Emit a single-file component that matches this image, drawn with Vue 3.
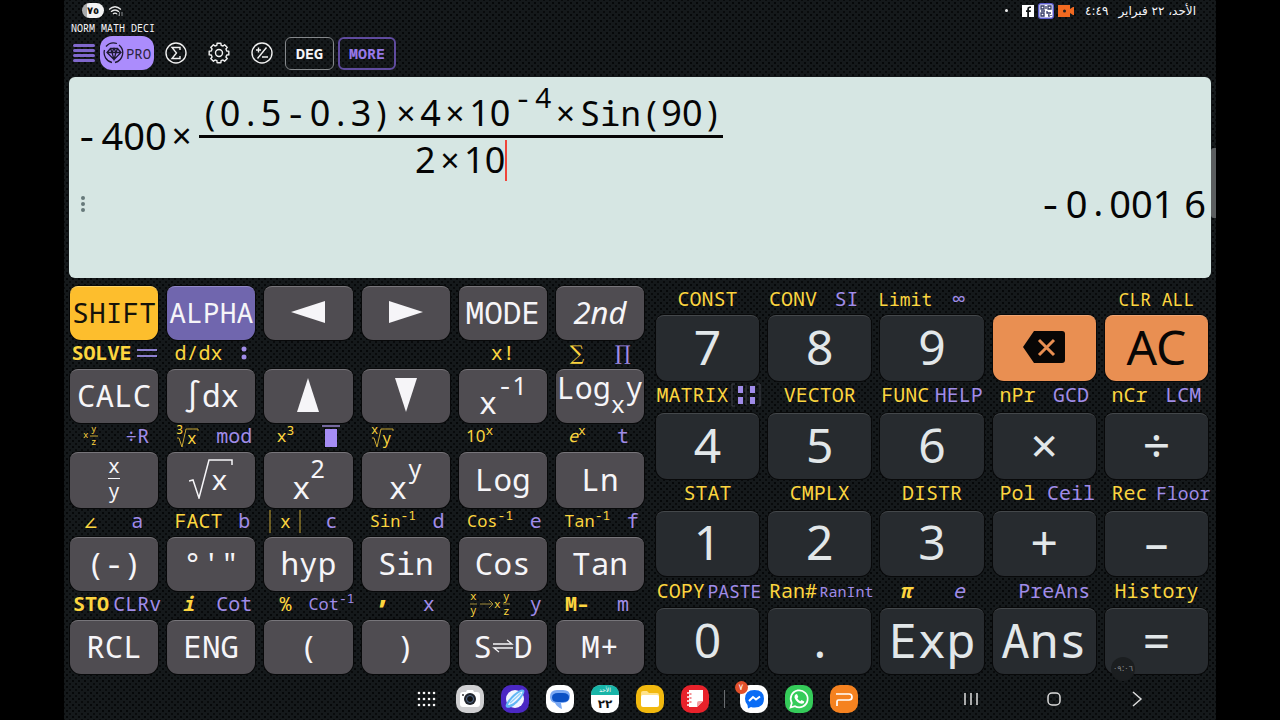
<!-- ScientificCalculator -->
<template>
  <div class="screen">
    <header class="status">
      <div class="status-side">
        <span class="battery">٧٥</span>
        <svg width="15" height="12" viewBox="0 0 15 12" fill="none" stroke="#e8e8e8" stroke-width="1.3">
          <path d="M1 4.5Q7 -1 13 4.5M3 6.8Q7 3.2 11 6.8M5 9Q7 7.2 9 9" />
          <path d="M11.5 7v4M10 9.5l1.500 1.500M14 7v4" stroke="#8a8d90" stroke-width="1" />
        </svg>
      </div>
      <div class="status-side notices" dir="rtl">
        <span>الأحد، ٢٢ فبراير</span>
        <span class="clock">٤:٤٩</span>
        <svg width="17" height="12" viewBox="0 0 17 12">
          <path d="M0 0h12v4l3-2h1v8h-1l-3-2v4H0z" fill="#f26a21" />
          <circle cx="6.500" cy="6" r="1.500" fill="#222" />
        </svg>
        <svg width="16" height="16" viewBox="0 0 16 16">
          <rect width="16" height="16" rx="3" fill="#5a5ccc" />
          <rect x="1.500" y="1.500" width="13" height="13" rx="1" fill="#fff" />
          <g fill="none" stroke="#333a66" stroke-width="1.300">
            <path d="M3 3h3v3H3zM10 3h3v3h-3zM3 10h3v3H3zM9 8v2h4M8 3v3M10 12h1v2M13 12v1M3 8h4" />
          </g>
        </svg>
        <svg width="12" height="12" viewBox="0 0 12 12">
          <rect width="12" height="12" fill="#fff" />
          <path d="M7 12V7h1.800V5.300H7V4q0-1 1-1h1V1.500H7.500Q5.200 1.500 5.200 4v1.300H4V7h1.200v5z" fill="#15191b" />
        </svg>
        <i class="more-dot"></i>
      </div>
    </header>

    <div class="modes">NORM MATH DECI</div>

    <nav class="toolbar">
      <button class="menu" aria-label="Menu"><i></i><i></i><i></i><i></i></button>
      <button class="pro">
        <svg width="22" height="22" viewBox="0 0 22 22" fill="none" stroke="#1d1930" stroke-width="1.300">
          <path d="M3 4.500A10 10 0 0 1 14 1.500M1.500 8A10 10 0 0 0 9 20.500M16 3a10 10 0 0 1-4 17.500" />
          <path d="M7.500 6.500h7L18 10.500l-7 7-7-7zM4 10.500h14M7.500 6.500l1.500 4 2 7 2-7 1.500-4M9 10.500l2-4 2 4" />
        </svg>
        <span>PRO</span>
      </button>
      <button class="tool" aria-label="Sum">
        <svg width="22" height="22" viewBox="0 0 22 22" fill="none" stroke="#f1f1f1" stroke-width="1.400">
          <circle cx="11" cy="11" r="10" />
          <path d="M15 8V5.500H7l4.500 5.500L7 16.500h8V14" />
        </svg>
      </button>
      <button class="tool" aria-label="Settings">
        <svg width="22" height="22" viewBox="0 0 22 22" fill="none" stroke="#f1f1f1" stroke-width="1.400" stroke-linejoin="round">
          <circle cx="11" cy="11" r="3.500" />
          <path :d="gearPath" />
        </svg>
      </button>
      <button class="tool" aria-label="Sign">
        <svg width="22" height="22" viewBox="0 0 22 22" fill="none" stroke="#f1f1f1" stroke-width="1.400">
          <circle cx="11" cy="11" r="10" />
          <path d="M5 8h5M7.500 5.500v5M15.500 5.500l-9 11M11 15h6" />
        </svg>
      </button>
      <button class="chip">DEG</button>
      <button class="chip more">MORE</button>
    </nav>

    <main class="display">
      <div class="expression">
        <b>-</b><span>400</span><b>×</b>
        <div class="fraction">
          <div class="part top">
            <em>(</em><span>0</span><em>.</em><span>5</span><b>-</b><span>0</span><em>.</em><span>3</span><em>)</em><b>×</b><span>4</span><b>×</b><span>10</span>
            <div class="power"><b>-</b><span>4</span></div>
            <b>×</b><em>Sin(</em><span>90</span><em>)</em>
          </div>
          <div class="part">
            <span>2</span><b>×</b><span>10</span><i class="caret"></i>
          </div>
        </div>
      </div>
      <div class="result">
        <button class="dots" aria-label="Options"><i></i><i></i><i></i></button>
        <output><b>-</b><span>0</span><em>.</em><span>001&nbsp;6</span></output>
      </div>
      <i class="scroll"></i>
    </main>

    <section class="keypad">
      <div class="pad functions">
        <div v-for="(row, r) in functionRows" :key="r" class="row">
          <div v-for="(k, c) in row" :key="c" class="cell">
            <div v-if="r > 0" class="labels" :class="k.split">
              <span v-if="k.y" class="y" v-html="k.y"></span>
              <span v-if="k.p" class="p" v-html="k.p"></span>
            </div>
            <button class="key" :class="k.cls" :aria-label="k.name" v-html="k.t"></button>
          </div>
        </div>
      </div>
      <div class="pad numbers">
        <div v-for="(row, r) in numberRows" :key="r" class="row">
          <div v-for="(k, c) in row" :key="c" class="cell">
            <div class="labels" :class="k.split">
              <span v-if="k.y" class="y" v-html="k.y"></span>
              <span v-if="k.p" class="p" v-html="k.p"></span>
            </div>
            <button class="key" :class="k.cls" :aria-label="k.name" v-html="k.t"></button>
          </div>
        </div>
      </div>
      <span class="bubble">٠٩:٠٦</span>
    </section>

    <footer class="taskbar">
      <div class="dock">
        <button class="app apps" aria-label="Apps">
          <svg viewBox="0 0 24 28" fill="#f4f4f4">
            <template v-for="y in 3" :key="y">
              <circle v-for="x in 4" :key="x" :cx="x * 5 - 1" :cy="y * 6 + 2" r="1.300" />
            </template>
          </svg>
        </button>
        <button class="app" aria-label="Camera">
          <svg viewBox="0 0 28 28">
            <rect width="28" height="28" rx="10" fill="#cfcfd1" />
            <path d="M7 7h3l1-2h6l1 2h3q3 0 3 3v9q0 3-3 3H7q-3 0-3-3v-9q0-3 3-3z" fill="#fff" />
            <circle cx="14" cy="14" r="6" fill="#20242b" />
            <circle cx="14" cy="14" r="3.500" fill="#111" stroke="#536b8c" />
            <circle cx="7" cy="10" r="1" fill="#333" />
          </svg>
        </button>
        <button class="app" aria-label="Internet">
          <svg viewBox="0 0 28 28">
            <rect width="28" height="28" rx="10" fill="#4b28c4" />
            <circle cx="14" cy="14" r="9" fill="#f3f5ff" />
            <path d="M5 22C2 18 19 1 23 5c3 4-13 22-18 17z" fill="#62b7f4" />
            <path d="M7 20C9 15 18 6 21.500 6.500c0 4-10 14-14.500 13.500z" fill="#f3f5ff" />
            <path d="M9 18L20 8" stroke="#8fd2fb" stroke-width="1.500" />
          </svg>
        </button>
        <button class="app" aria-label="Messages">
          <svg viewBox="0 0 28 28">
            <rect width="28" height="28" rx="10" fill="#fff" />
            <path d="M11 5h6q7 0 7 6t-7 7h-2l1 6q-5-2-7-6-5-1-5-6 0-7 7-7z" fill="#7ba9f3" />
            <path d="M12 8h5q6 0 6 4.500T17 17h-5q-6 0-6-4.500T12 8z" fill="#0b51c5" />
          </svg>
        </button>
        <button class="app" aria-label="Calendar">
          <svg viewBox="0 0 28 28">
            <rect width="28" height="28" rx="10" fill="#fff" />
            <path d="M0 10q0-10 10-10h8q10 0 10 10z" fill="#18b5a8" />
            <text x="14" y="7" class="cal-day">الأحد</text>
            <text x="14" y="23" class="cal-date">٢٢</text>
          </svg>
        </button>
        <button class="app" aria-label="Files">
          <svg viewBox="0 0 28 28">
            <rect width="28" height="28" rx="10" fill="#f2b90f" />
            <path d="M5 8q0-2 2-2h4l2 2h8q2 0 2 2v10H5z" fill="#ffe28a" />
            <rect x="5" y="10" width="18" height="12" rx="2" fill="#fff" />
          </svg>
        </button>
        <button class="app" aria-label="Notes">
          <svg viewBox="0 0 28 28">
            <rect width="28" height="28" rx="10" fill="#e8222b" />
            <path d="M8 5h14v11l-6 6H8z" fill="#fff" />
            <path d="M22 16h-4q-2 0-2 2v4z" fill="#f3a0a2" />
            <path d="M6 8h4M6 12h4M6 16h4M6 20h4" stroke="#fff" stroke-width="1.500" />
            <path d="M8.500 9h2M8.500 13h2M8.500 17h2" stroke="#e8222b" />
          </svg>
        </button>
        <i class="divider"></i>
        <button class="app" aria-label="Messenger">
          <svg viewBox="0 0 28 28">
            <rect width="28" height="28" rx="10" fill="#fff" />
            <path d="M14.500 5q9.500 0 9.500 8.800T14.500 22.500q-2 0-3.500-.5l-3 1.500-.5-3.500Q5 17.500 5 13.800 5 5 14.500 5z" fill="#0a6cf5" />
            <path d="M9 16l4-4 3 2.500 4-3" fill="none" stroke="#fff" stroke-width="2" />
          </svg>
          <span class="badge">٧</span>
        </button>
        <button class="app" aria-label="WhatsApp">
          <svg viewBox="0 0 28 28">
            <rect width="28" height="28" rx="10" fill="#35cc5a" />
            <path d="M5.500 22.500l1.300-4.500a8.500 8.500 0 1 1 3.200 3.200z" fill="none" stroke="#fff" stroke-width="1.700" />
            <path d="M10.500 9.500l1.500-.5 1.300 3-1 1.200q1 2 3 3l1.200-1.200 2.800 1.400q0 2.100-2.500 2.400-5-.3-7.300-6-.2-2.300 1-3.300z" fill="#fff" />
          </svg>
        </button>
        <button class="app" aria-label="Presentation">
          <svg viewBox="0 0 28 28">
            <rect width="28" height="28" rx="10" fill="#f58220" />
            <path d="M6 9h13q3 0 3 3t-3 3H8.500q-1.500 0-1.500 1.500V21" fill="none" stroke="#fff" stroke-width="1.700" />
          </svg>
        </button>
      </div>
      <div class="nav">
        <button aria-label="Recents">
          <svg width="16" height="16" viewBox="0 0 16 16" stroke="#ddd" stroke-width="1.500"><path d="M2 2v12M8 2v12M14 2v12" /></svg>
        </button>
        <button aria-label="Home">
          <svg width="16" height="16" viewBox="0 0 16 16" fill="none" stroke="#ddd" stroke-width="1.500"><rect x="2" y="2" width="12" height="12" rx="4" /></svg>
        </button>
        <button aria-label="Back">
          <svg width="16" height="16" viewBox="0 0 16 16" fill="none" stroke="#ddd" stroke-width="1.500"><path d="M4 1l8 7-8 7" /></svg>
        </button>
      </div>
    </footer>
  </div>
</template>

<script setup>
import { computed } from 'vue';

// Small drawings used on the keys and above them
const arrow = (points) =>
  `<svg width="36" height="36" viewBox="0 0 36 36"><polygon points="${points}" fill="#f6f5f8"/></svg>`;

const radical = `<svg width="44" height="40" viewBox="0 0 44 40">
  <path d="M0 22l4-1 6 18L20 1h23v5" fill="none" stroke="#f6f5f8" stroke-width="1.500"/>
  <text x="22" y="31" font-size="28" fill="#f6f5f8">x</text></svg>`;

const rootLabel = (index, body) => `<svg width="24" height="27" viewBox="0 0 24 27">
  <path d="M1 16h2l3 9L10 7h12v2" fill="none" stroke="#c9a732" stroke-width="1"/>
  <text x="0" y="12" font-size="12">${index}</text><text x="11" y="22" font-size="16">${body}</text></svg>`;

const mixedLabel = `<svg width="16" height="26" viewBox="0 0 16 26">
  <text x="0" y="15" font-size="9">x</text><text x="8" y="9" font-size="9">y</text>
  <path d="M7 13h8" stroke="#c9a732"/><text x="8" y="22" font-size="9">z</text></svg>`;

const convertLabel = `<svg width="40" height="28" viewBox="0 0 40 28">
  <text x="0" y="10" font-size="11">x</text><text x="0" y="24" font-size="11">y</text>
  <path d="M0 14h7M33 14h7M10 14h13M19 10l4 4-4 4" stroke="#a08a3a" fill="none"/>
  <text x="24" y="18" font-size="11">x</text><text x="33" y="10" font-size="11">y</text><text x="33" y="25" font-size="11">z</text></svg>`;

const absLabel = `<svg width="32" height="26" viewBox="0 0 32 26">
  <path d="M1 2v23M31 2v23" stroke="#c9a732"/><text x="11" y="20" font-size="18">x</text></svg>`;

const swap = `<svg width="22" height="16" viewBox="0 0 22 16">
  <path d="M1 6h19l-5-4M21 10H2l5 4" fill="none" stroke="#f6f5f8" stroke-width="1.300"/></svg>`;

const equals = `<svg width="20" height="10" viewBox="0 0 20 10"><path d="M0 2h20M0 8h20" stroke="#8d80d0" stroke-width="2"/></svg>`;
const colon = `<svg width="6" height="14" viewBox="0 0 6 14"><circle cx="3" cy="3" r="2.500" fill="#a08ce8"/><circle cx="3" cy="11" r="2.500" fill="#a08ce8"/></svg>`;
const cursor = `<svg width="18" height="22" viewBox="0 0 18 22"><path d="M0 1h18" stroke="#76699f" stroke-width="2"/><rect x="3" y="4" width="12" height="18" fill="#a68df5"/></svg>`;
const matrix = `<svg width="30" height="24" viewBox="0 0 30 24">
  <path d="M4 1H1v22h3M26 1h3v22h-3M15 2v20" fill="none" stroke="#3f4148"/>
  <path d="M7 3h5v7H7zM19 3h5v7h-5zM7 14h5v7H7zM19 14h5v7h-5z" fill="#a08ce8"/></svg>`;
const erase = `<svg width="44" height="34" viewBox="0 0 44 34">
  <path d="M12 1h28q3 0 3 3v26q0 3-3 3H12L1 17z" fill="#080605"/>
  <path d="M17 10l15 15M32 10L17 25" stroke="#e98f52" stroke-width="3"/></svg>`;

const functionRows = [
  [
    { t: 'SHIFT', cls: 'shift' },
    { t: 'ALPHA', cls: 'alpha' },
    { t: arrow('1,18 35,7 35,29'), name: 'Left' },
    { t: arrow('1,7 35,18 1,29'), name: 'Right' },
    { t: 'MODE' },
    { t: '2nd', cls: 'second' },
  ],
  [
    { t: 'CALC', y: '<b>SOLVE</b>', p: equals, split: 'wide' },
    { t: '∫dx', y: 'd/dx', p: colon, split: 'wide' },
    { t: arrow('18,1 29,35 7,35'), name: 'Up' },
    { t: arrow('7,1 29,1 18,35'), name: 'Down' },
    { t: 'x<sup>-<u>1</u></sup>', cls: 'pow', y: 'x!' },
    { t: 'Log<sub>x</sub>y', cls: 'tight', y: '<tt>∑</tt>', p: '<tt>∏</tt>' },
  ],
  [
    { t: '<span class="stack"><i>x</i><i>y</i></span>', y: mixedLabel, p: '÷R' },
    { t: radical, name: 'Square root', y: rootLabel('3', 'x'), p: 'mod' },
    { t: 'x<sup><u>2</u></sup>', cls: 'pow', y: '<small>x<sup>3</sup></small>', p: cursor },
    { t: 'x<sup>y</sup>', cls: 'pow', y: rootLabel('x', 'y'), p: '&nbsp;' },
    { t: 'Log', y: '<small><u>10</u><sup>x</sup></small>', p: '&nbsp;' },
    { t: 'Ln', y: '<small><em>e</em><sup>x</sup></small>', p: 't' },
  ],
  [
    { t: '(-)', y: '∠', p: 'a' },
    { t: '°\'"', y: 'FACT', p: 'b', split: 'wide' },
    { t: 'hyp', y: absLabel, p: 'c' },
    { t: 'Sin', y: '<small>Sin<sup>-1</sup></small>', p: 'd', split: 'wide' },
    { t: 'Cos', y: '<small>Cos<sup>-1</sup></small>', p: 'e', split: 'wide' },
    { t: 'Tan', y: '<small>Tan<sup>-1</sup></small>', p: 'f', split: 'wide' },
  ],
  [
    { t: 'RCL', y: '<b>STO</b>', p: 'CLRv' },
    { t: 'ENG', y: '<b><em>i</em></b>', p: 'Cot' },
    { t: '(', y: '%', p: '<small>Cot<sup>-1</sup></small>' },
    { t: ')', y: '<big>’</big>', p: 'x' },
    { t: `S${swap}D`, y: convertLabel, p: 'y', split: 'wide' },
    { t: 'M+', y: '<b>M–</b>', p: 'm' },
  ],
];

const numberRows = [
  [
    { t: '7', y: 'CONST' },
    { t: '8', y: 'CONV', p: 'SI' },
    { t: '9', y: '<small>Limit</small>', p: '∞' },
    { t: erase, cls: 'orange', name: 'Delete' },
    { t: 'AC', cls: 'orange', y: '<small>CLR ALL</small>' },
  ],
  [
    { t: '4', y: 'MATRIX', p: matrix, split: 'wide' },
    { t: '5', y: 'VECTOR' },
    { t: '6', y: 'FUNC', p: 'HELP' },
    { t: '×', y: 'nPr', p: 'GCD' },
    { t: '÷', y: 'nCr', p: 'LCM' },
  ],
  [
    { t: '1', y: 'STAT' },
    { t: '2', y: 'CMPLX' },
    { t: '3', y: 'DISTR' },
    { t: '+', y: 'Pol', p: 'Ceil' },
    { t: '–', y: 'Rec', p: '<small>Floor</small>' },
  ],
  [
    { t: '0', y: 'COPY', p: '<small>PASTE</small>' },
    { t: '.', cls: 'mono', y: 'Ran#', p: '<s>RanInt</s>' },
    { t: 'Exp', cls: 'mono', y: '<b><em>π</em></b>', p: '<em>e</em>' },
    { t: 'Ans', cls: 'mono', p: 'PreAns', split: 'late' },
    { t: '=', y: 'History' },
  ],
];

// Eight-tooth gear outline around (11, 11)
const gearPath = computed(() => {
  const pts = [];
  for (let i = 0; i < 8; i++) {
    for (const [offset, radius] of [[-15, 8], [-11, 10], [11, 10], [15, 8]]) {
      const a = ((i * 45 + offset) * Math.PI) / 180;
      pts.push(`${(11 + radius * Math.cos(a)).toFixed(2)} ${(11 + radius * Math.sin(a)).toFixed(2)}`);
    }
  }
  return `M${pts.join('L')}z`;
});
</script>

<style>
body {
  background: #000;
}
</style>

<style scoped>
.screen {
  --mono: "Droid Sans Mono", "Noto Sans Mono", "DejaVu Sans Mono", monospace;
  --digits: "Noto Sans", sans-serif;
  box-sizing: border-box;
  min-height: 100vh;
  margin: 0 5%;
  display: flex;
  flex-direction: column;
  background-color: #15191b;
  background-image:
    radial-gradient(circle, #060809 1px, transparent 1px),
    radial-gradient(circle, #090b0c 1px, transparent 1px);
  background-size: 6px 6px;
  background-position: 0 0, 3px 3px;
  font-family: var(--mono);
  color: #f6f5f8;
}
button {
  border: none;
  padding: 0;
  background: none;
  color: inherit;
  font-family: inherit;
  cursor: pointer;
}
svg {
  display: block;
  flex: none;
}

/* status bar */
.status {
  display: flex;
  justify-content: space-between;
  height: 21px;
  padding: 0 20px 0 18px;
}
.status-side {
  display: flex;
  align-items: center;
  gap: 4px;
}
.battery {
  width: 22px;
  border-radius: 8px;
  background: linear-gradient(90deg, #a9abad 5px, #f4f4f4 5px);
  color: #111;
  font: bold 10px/15px "DejaVu Sans", sans-serif;
  text-align: center;
}
.notices {
  font: 12px/20px "DejaVu Sans", sans-serif;
}
.clock {
  margin: 0 6px 0 6px;
}
.more-dot {
  width: 3px;
  height: 3px;
  margin-right: 10px;
  border-radius: 50%;
  background: #eee;
}
.modes {
  height: 15px;
  padding-left: 7px;
  font-size: 10px;
  line-height: 15px;
}

/* toolbar */
.toolbar {
  display: flex;
  align-items: center;
  height: 34px;
  padding-left: 9px;
}
.menu {
  display: flex;
  flex-direction: column;
  gap: 2px;
  width: 22px;
  margin-right: 5px;
}
.menu i {
  height: 3px;
  border-radius: 2px;
  background: #8068cc;
}
.pro {
  display: flex;
  align-items: center;
  justify-content: center;
  gap: 1px;
  width: 54px;
  height: 34px;
  border-radius: 12px;
  background: #ab8cfc;
  color: #2b2440;
  font-size: 14px;
}
.tool {
  display: flex;
  justify-content: center;
  width: 43px;
}
.chip {
  height: 33px;
  margin: 0 2px;
  padding: 0 10px;
  border: 1px solid #85888b;
  border-radius: 6px;
  font-size: 15px;
  font-weight: bold;
}
.more {
  border: 2px solid #5f4b9e;
  padding: 0 9px;
  color: #9578e8;
}

/* display */
.display {
  position: relative;
  height: 201px;
  margin: 7px 5px 0;
  border-radius: 6px;
  background: #d6e6e3;
  color: #050505;
  font-size: 36px;
}
.expression,
.part,
output {
  display: flex;
  align-items: center;
  white-space: nowrap;
}
.expression {
  padding: 14px 0 0 3px;
}
.display span {
  font-family: var(--digits);
}
.display b,
.display em {
  font-style: normal;
  font-weight: normal;
}
.display b {
  margin: 0 4px;
}
.expression > span,
output {
  font-size: 38px;
}
.expression > span,
.expression > b,
output {
  margin-bottom: 3px;
}
output em {
  font-size: 36px;
}
.fraction {
  margin-left: 3px;
}
.part {
  justify-content: center;
  height: 44px;
  font-size: 34px;
  line-height: 44px;
}
.part > span {
  font-size: 36px;
}
.part.top {
  border-bottom: 3px solid #050505;
}
.power {
  display: flex;
  align-items: center;
  align-self: flex-start;
  height: 12px;
  font-size: 28px;
}
.caret {
  width: 2px;
  height: 41px;
  background: #f0453a;
}
.result {
  display: flex;
  align-items: center;
  justify-content: space-between;
  height: 44px;
  padding: 0 5px 0 12px;
}
.dots {
  display: flex;
  flex-direction: column;
  gap: 2px;
}
.dots i {
  width: 4px;
  height: 4px;
  border-radius: 50%;
  background: #66797a;
}
.scroll {
  position: absolute;
  top: 71px;
  right: -5px;
  width: 5px;
  height: 70px;
  border-radius: 3px 0 0 3px;
  background: #5b5e60;
}

/* keypad */
.keypad {
  position: relative;
  flex: 1;
  display: flex;
  gap: 12px;
  padding: 8px 8px 0 6px;
}
.pad {
  display: flex;
  flex-direction: column;
  min-width: 0;
}
.functions {
  flex: 574 1 0;
}
.numbers {
  flex: 552 1 0;
}
.row {
  flex: 1 0 auto;
  display: flex;
  gap: 9px;
}
.cell {
  flex: 1 1 0;
  min-width: 0;
  display: flex;
  flex-direction: column;
}
.labels {
  display: flex;
  box-sizing: border-box;
  height: 29px;
  margin: 0 -2px;
  padding-bottom: 3px;
  font-size: 20px;
  line-height: 26px;
  white-space: nowrap;
}
.numbers .row + .row .labels {
  height: 32px;
}
.labels > span {
  flex: 1 1 0;
  min-width: 0;
  display: flex;
  align-items: center;
  justify-content: center;
}
.labels.wide {
  margin-left: 1px;
  margin-right: -4px;
}
.labels.wide .y {
  flex-grow: 2;
}
.labels.late {
  padding-left: 20px;
}
.y {
  color: #fcd53f;
}
.p {
  color: #a08ce8;
}
.labels :deep(svg) {
  flex: none;
  overflow: visible;
  fill: #fcd53f;
}
.labels :deep(small) {
  font-size: 18px;
}
.functions .labels :deep(small) {
  font-size: 17px;
}
.labels :deep(s) {
  font-size: 15px;
  text-decoration: none;
}
.labels :deep(sup) {
  font-size: 13px;
  line-height: 0;
  vertical-align: 7px;
}
.labels :deep(tt) {
  font-family: "DejaVu Serif", serif;
}
.labels :deep(big) {
  font: bold 30px/0 "Noto Sans", sans-serif;
  padding-top: 14px;
}
:deep(u) {
  font-family: var(--digits);
  text-decoration: none;
}
.key {
  flex: 1;
  display: flex;
  align-items: center;
  justify-content: center;
  min-height: 50px;
  padding-bottom: 3px;
  border-top: 1px solid #77757a;
  border-radius: 8px 8px 11px 11px;
  background: #4f4c51;
  box-shadow: 0 0 0 1px #08090a;
  font-size: 31px;
  line-height: 36px;
  white-space: nowrap;
}
.key.pow {
  align-items: flex-end;
}
.key :deep(sup) {
  align-self: flex-start;
  font-size: 25px;
  line-height: 30px;
}
.key :deep(sub) {
  align-self: flex-end;
  font-size: 24px;
  line-height: 32px;
}
.key :deep(.stack) {
  font-size: 20px;
  line-height: 24px;
}
.key :deep(.stack i) {
  display: block;
  font-style: normal;
}
.key :deep(.stack i + i) {
  border-top: 1px solid #f6f5f8;
}
.shift,
.alpha {
  font-size: 28px;
}
.key.tight {
  align-items: flex-start;
  font-size: 30px;
}
.shift {
  border-color: #ffd56a;
  background: #fdbe2d;
  color: #15120a;
}
.alpha {
  border-color: #9289c8;
  background: #7066ae;
}
.second {
  font-family: var(--digits);
  font-style: italic;
}
.numbers .key {
  border-color: #44484b;
  background: #272b2f;
  color: #e2e7e9;
  font-family: var(--digits);
  font-size: 48px;
  line-height: 60px;
}
.numbers .key.mono {
  font-family: var(--mono);
}
.numbers .key.orange {
  border-color: #f0a573;
  background: #e98f52;
  color: #080605;
}
.bubble {
  position: absolute;
  right: 81px;
  bottom: -7px;
  width: 24px;
  border-radius: 50%;
  background: #1b1e20;
  color: #8a8d8f;
  font: 8px/24px "DejaVu Sans", sans-serif;
  text-align: center;
}

/* taskbar */
.taskbar {
  display: grid;
  grid-template-columns: 1fr auto 1fr;
  align-items: center;
  height: 42px;
  padding-top: 4px;
}
.dock {
  grid-column: 2;
  display: flex;
  align-items: center;
  gap: 17px;
  margin-right: 8px;
}
.app {
  position: relative;
  width: 28px;
  height: 28px;
}
.apps {
  width: 24px;
}
.cal-day {
  fill: #fff;
  font: 6px "DejaVu Sans", sans-serif;
  text-anchor: middle;
}
.cal-date {
  fill: #111;
  font: bold 12px "DejaVu Sans", sans-serif;
  text-anchor: middle;
}
.divider {
  width: 1px;
  height: 18px;
  margin: 0 -2px;
  background: #6a6d70;
}
.badge {
  position: absolute;
  top: -4px;
  left: -5px;
  width: 13px;
  border-radius: 50%;
  background: #e2502b;
  color: #fff;
  font: 9px/13px "DejaVu Sans", sans-serif;
}
.nav {
  display: flex;
  justify-self: end;
  margin-right: 38px;
}
.nav button {
  display: flex;
  justify-content: center;
  width: 83px;
}
</style>
